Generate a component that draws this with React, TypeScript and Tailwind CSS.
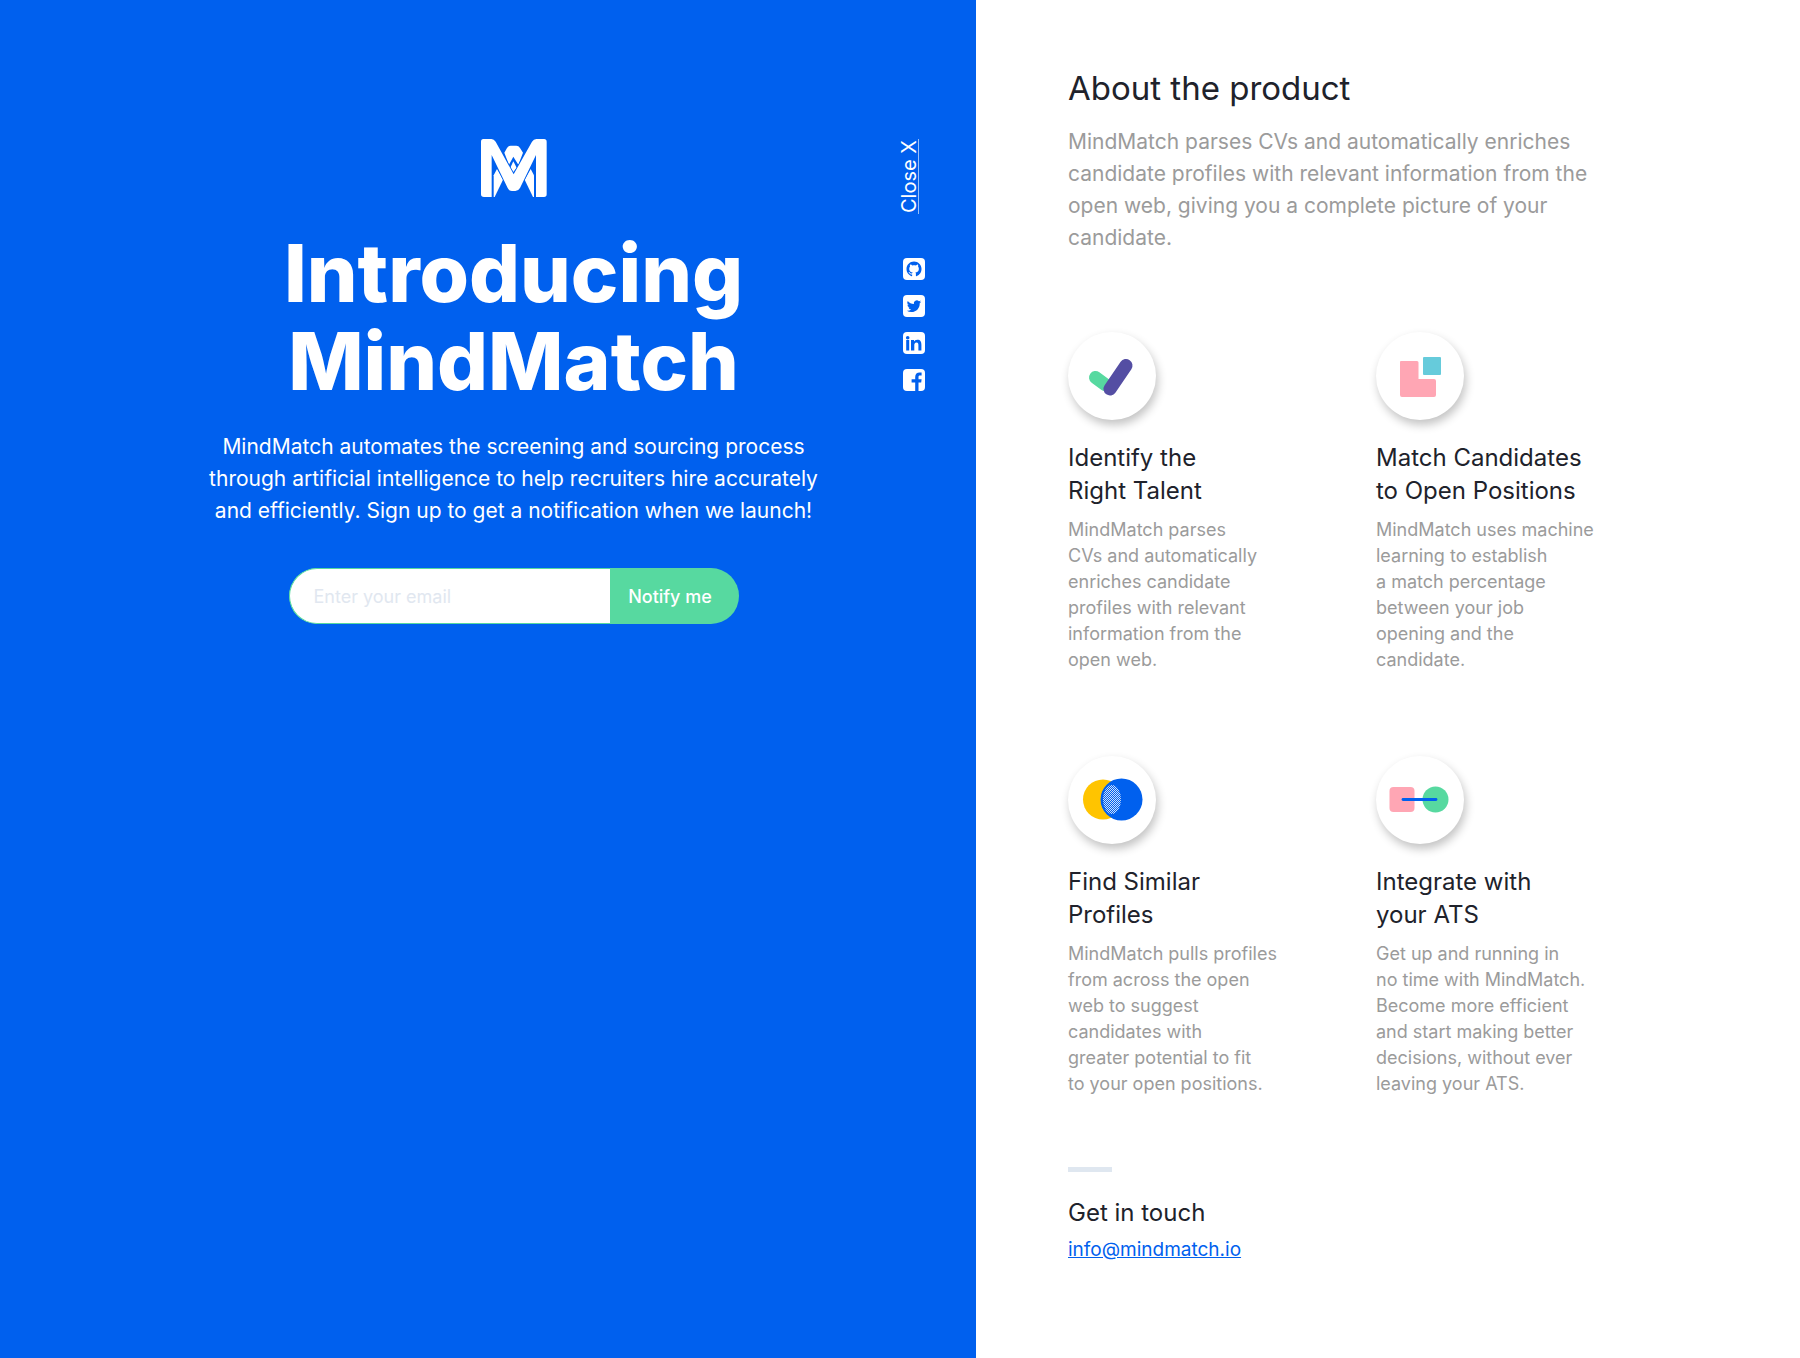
import React from "react";

type CardProps = {
  title: [string, string];
  lines: string[];
  icon: React.ReactNode;
};

function Lines({ items }: { items: string[] }) {
  return (
    <>
      {items.map((line) => (
        <span key={line} className="block whitespace-nowrap">
          {line}
        </span>
      ))}
    </>
  );
}

function Logo() {
  return (
    <svg width="66" height="58" viewBox="61 57 198 174" role="img" aria-label="MindMatch" fill="#fff">
      <path d="M109 147 L127 179 L102 231 H99 V166 Z" />
      <path d="M210 147 L192 179 L217 231 H220 V166 Z" />
      <path d="M131 98 L139 84 Q143 77 150 77 H167 Q174 77 178 84 L187 98 L173 134 L158 110 L145 134 Z" />
      <path d="M158 124 L168 143 L158 156 L149 143 Z" />
      <path
        d="M68 57 H92 Q100 57 105 65 L159 163 L214 65 Q219 57 227 57 H250 Q258 57 258 65 V223 Q258 231 250 231 H226 V105 L178 204 Q173 213 164 213 H154 Q145 213 141 204 L93 105 V231 H70 Q61 231 61 223 V65 Q61 57 68 57 Z"
        stroke="#0060ee"
        strokeWidth="5"
        paintOrder="stroke"
      />
    </svg>
  );
}

const social = [
  {
    name: "GitHub",
    path: "M8 0C3.58 0 0 3.58 0 8c0 3.54 2.29 6.53 5.47 7.59.4.07.55-.17.55-.38 0-.19-.01-.82-.01-1.49-2.01.37-2.53-.49-2.69-.94-.09-.23-.48-.94-.82-1.13-.28-.15-.68-.52-.01-.53.63-.01 1.08.58 1.23.82.72 1.21 1.87.87 2.33.66.07-.52.28-.87.51-1.07-1.78-.2-3.64-.89-3.64-3.95 0-.87.31-1.59.82-2.15-.08-.2-.36-1.02.08-2.12 0 0 .67-.21 2.2.82.64-.18 1.32-.27 2-.27s1.36.09 2 .27c1.53-1.04 2.2-.82 2.2-.82.44 1.1.16 1.92.08 2.12.51.56.82 1.27.82 2.15 0 3.07-1.87 3.75-3.65 3.95.29.25.54.73.54 1.48 0 1.07-.01 1.93-.01 2.2 0 .21.15.46.55.38A8.01 8.01 0 0 0 16 8c0-4.42-3.58-8-8-8z",
    transform: "translate(3.5 3.5) scale(.94)",
  },
  {
    name: "Twitter",
    path: "M23.95 4.57a10 10 0 0 1-2.82.77 4.96 4.96 0 0 0 2.16-2.72c-.95.55-2 .95-3.13 1.18a4.92 4.92 0 0 0-8.38 4.48C7.69 8.1 4.07 6.13 1.64 3.16a4.92 4.92 0 0 0 1.52 6.57 4.9 4.9 0 0 1-2.23-.61v.06a4.92 4.92 0 0 0 3.95 4.83 5 5 0 0 1-2.21.08 4.94 4.94 0 0 0 4.6 3.42A9.87 9.87 0 0 1 0 19.54a14 14 0 0 0 7.55 2.21c9.05 0 14-7.5 14-13.98 0-.21 0-.42-.02-.63a9.94 9.94 0 0 0 2.46-2.55z",
    transform: "translate(3.8 4) scale(.6)",
  },
  {
    name: "LinkedIn",
    path: "M3.2 8h3v10.6h-3zM4.7 4a1.8 1.8 0 1 1 0 3.6 1.8 1.8 0 0 1 0-3.6zM8 8h3v1.5c.5-.9 1.6-1.8 3.3-1.8 3.3 0 4.1 2.1 4.1 5v5.9h-3v-5.2c0-1.4-.1-2.9-1.9-2.9-1.8 0-2.2 1.4-2.2 2.9v5.2H8z",
    transform: "",
  },
  {
    name: "Facebook",
    path: "M12.2 22v-8.4H8.6v-3.3h3.6V8c0-3 1.8-4.4 4.4-4.4h2v3h-1.6c-1.3 0-1.5.7-1.500 1.500v2.200h3.100l-.4 3.300h-2.700V22z",
    transform: "",
  },
];

function CheckIcon() {
  return (
    <svg width="88" height="88" viewBox="0 0 88 88" aria-hidden="true" fill="none" strokeLinecap="round">
      <path d="M27.5 45.5 L37 52.5" stroke="#57d9a0" strokeWidth="13" />
      <path d="M42 57 L58 33.500" stroke="#544ea3" strokeWidth="13" />
    </svg>
  );
}

function MatchIcon() {
  return (
    <svg width="88" height="88" viewBox="0 0 88 88" aria-hidden="true">
      <path d="M25 29 H41 Q42.5 29 42.5 30.5 V47 H58 Q60 47 60 49 V63 Q60 65 58 65 H26 Q24 65 24 63 V30 Q24 29 25 29Z" fill="#ffa6b4" />
      <rect x="47" y="25" width="18" height="18" rx="1" fill="#66cbdb" />
    </svg>
  );
}

function OverlapIcon() {
  return (
    <svg width="88" height="88" viewBox="0 0 88 88" aria-hidden="true">
      <defs>
        <pattern id="dots" width="2" height="2" patternUnits="userSpaceOnUse">
          <rect width="1" height="1" fill="#cfe0fb" />
          <rect x="1" y="1" width="1" height="1" fill="#cfe0fb" />
        </pattern>
      </defs>
      <circle cx="35" cy="43.5" r="20" fill="#ffc400" />
      <circle cx="53.5" cy="43.5" r="21" fill="#0060ee" />
      <ellipse cx="44" cy="43.5" rx="9" ry="14.5" fill="url(#dots)" />
    </svg>
  );
}

function ConnectIcon() {
  return (
    <svg width="88" height="88" viewBox="0 0 88 88" aria-hidden="true">
      <rect x="13.5" y="31" width="25" height="25" rx="4" fill="#ffa6b4" />
      <circle cx="59.5" cy="43.5" r="13" fill="#57d9a0" />
      <path d="M27 43.5H60" stroke="#0060ee" strokeWidth="2.8" strokeLinecap="round" />
    </svg>
  );
}

function Card({ title, lines, icon }: CardProps) {
  return (
    <article>
      <div className="size-[88px] rounded-full bg-white shadow-[2px_5px_10px_rgba(0,0,0,0.24)]">{icon}</div>
      <h3 className="mt-[21px] text-[24px] leading-[33px] text-[#20222b]">
        <Lines items={title} />
      </h3>
      <p className="mt-2.5 text-[18px] leading-[26px] text-[#9b9b9b]">
        <Lines items={lines} />
      </p>
    </article>
  );
}

const cards: CardProps[] = [
  {
    title: ["Identify the", "Right Talent"],
    lines: ["MindMatch parses", "CVs and automatically", "enriches candidate", "profiles with relevant", "information from the", "open web."],
    icon: <CheckIcon />,
  },
  {
    title: ["Match Candidates", "to Open Positions"],
    lines: ["MindMatch uses machine", "learning to establish", "a match percentage", "between your job", "opening and the", "candidate."],
    icon: <MatchIcon />,
  },
  {
    title: ["Find Similar", "Profiles"],
    lines: ["MindMatch pulls profiles", "from across the open", "web to suggest", "candidates with", "greater potential to fit", "to your open positions."],
    icon: <OverlapIcon />,
  },
  {
    title: ["Integrate with", "your ATS"],
    lines: ["Get up and running in", "no time with MindMatch.", "Become more efficient", "and start making better", "decisions, without ever", "leaving your ATS."],
    icon: <ConnectIcon />,
  },
];

export default function App() {
  return (
    <div className="grid min-h-screen grid-cols-[976fr_824fr] bg-white font-['Inter',sans-serif]">
      <section className="flex bg-[#0060ee] pt-[139px] pl-[127px] text-white">
        <main className="flex min-w-0 flex-1 flex-col items-center text-center">
          <Logo />
          <h1 className="mt-8 text-[80px] leading-[88px] font-extrabold">
            <Lines items={["Introducing", "MindMatch"]} />
          </h1>
          <p className="mt-[26px] text-[21px] leading-[32px]">
            <Lines
              items={[
                "MindMatch automates the screening and sourcing process",
                "through artificial intelligence to help recruiters hire accurately",
                "and efficiently. Sign up to get a notification when we launch!",
              ]}
            />
          </p>
          <form className="mt-[41px] flex h-14 w-[450px] overflow-hidden rounded-full bg-[#57d9a0]" onSubmit={(e) => e.preventDefault()}>
            <input
              type="email"
              aria-label="Email"
              placeholder="Enter your email"
              className="min-w-0 flex-1 rounded-l-full border border-r-0 border-[#57d9a0] bg-white pl-6 text-[18px] text-[#20222b] outline-none placeholder:text-[#e1e7f0]"
            />
            <button type="submit" className="w-[129px] pr-2 text-[18px] font-medium">
              Notify me
            </button>
          </form>
        </main>
        <aside className="flex w-[76px] flex-col items-start">
          <button type="button" className="h-[75px] rotate-180 border-l border-white/60 text-[20px] leading-[18px] [writing-mode:vertical-rl]">
            Close X
          </button>
          <nav aria-label="Social" className="mt-[44px] ml-[3px] flex flex-col gap-[15px]">
            {social.map((s) => (
              <a key={s.name} href="#" aria-label={s.name}>
                <svg width="22" height="22" viewBox="0 0 22 22" aria-hidden="true">
                  <rect width="22" height="22" rx="4" fill="#fff" />
                  <path d={s.path} transform={s.transform} fill="#0060ee" />
                </svg>
              </a>
            ))}
          </nav>
        </aside>
      </section>
      <section className="px-[92px] pt-16 pb-16">
        <h2 className="text-[33px] leading-[48px] text-[#20222b]">About the product</h2>
        <p className="mt-3.5 text-[21px] leading-[32px] text-[#9b9b9b]">
          <Lines
            items={[
              "MindMatch parses CVs and automatically enriches",
              "candidate profiles with relevant information from the",
              "open web, giving you a complete picture of your",
              "candidate.",
            ]}
          />
        </p>
        <div className="mt-[78px] grid grid-cols-[repeat(2,228px)] gap-x-20 gap-y-[83px]">
          {cards.map((c) => (
            <Card key={c.title[0]} {...c} />
          ))}
        </div>
        <footer className="mt-[70px]">
          <hr className="h-[5px] w-11 border-0 bg-[#dfe7f0]" />
          <h3 className="mt-[24px] text-[24px] leading-[33px] text-[#20222b]">Get in touch</h3>
          <a href="mailto:info@mindmatch.io" className="mt-2 inline-block text-[19px] leading-[26px] text-[#0060ee] underline">
            info@mindmatch.io
          </a>
        </footer>
      </section>
    </div>
  );
}
